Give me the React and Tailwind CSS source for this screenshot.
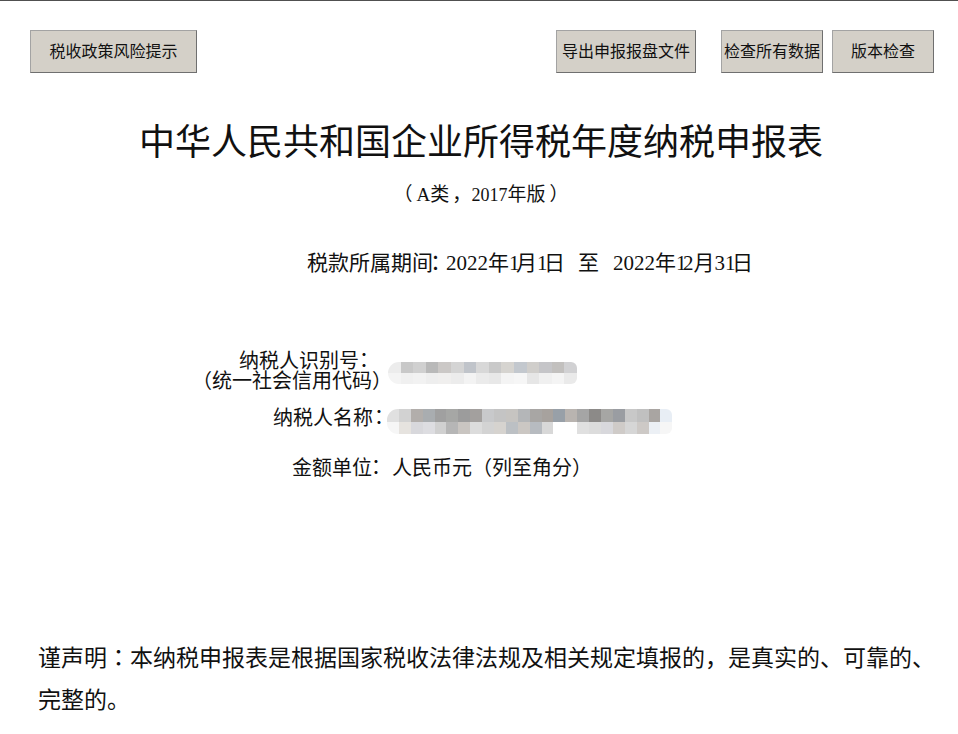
import React from "react";

const FONT = { fontFamily: '"Noto Sans CJK SC", sans-serif' };

function Btn({ w, children }) {
  return (
    <button
      className={`h-[43px] ${w} bg-[#d4d0c8] border border-[#a3a3a3] border-r-[#6f6f6f] border-b-[#6f6f6f] text-[16px] leading-none text-[#111] flex items-center justify-center whitespace-nowrap pb-[4px]`}
    >
      {children}
    </button>
  );
}

function Colon({ className = "" }) {
  return <span className={`font-['Noto_Sans_CJK_JP'] ${className}`}>：</span>;
}

function Num({ v }) {
  return (
    <span className="font-['Liberation_Serif']">
      {v.split("").map((c, i) =>
        c === "1" ? (
          <span key={i} className="-mr-[3.5px]">1</span>
        ) : (
          <span key={i}>{c}</span>
        )
      )}
    </span>
  );
}

function PixelBlur({ rows, cellW, rowH, className }) {
  return (
    <div className={`flex flex-col overflow-hidden rounded-l-[11px] rounded-r-[6px] blur-[0.7px] ${className}`}>
      {rows.map((r, i) => (
        <div key={i} className="flex">
          {r.map((c, j) => (
            <div key={j} style={{ width: cellW, height: rowH, backgroundColor: c }} />
          ))}
        </div>
      ))}
    </div>
  );
}

const blur1 = [
  ["#ececec", "#c8c8c8", "#d0d0d0", "#b9b9b9", "#cbc8c6", "#d4d4d4", "#c0c4ca", "#d8d8d8", "#c9c9c9", "#d6d4d0", "#c3c8ce", "#d0cecb", "#c5c5c8", "#c2c0be", "#d1d1d3"],
  ["#f4f4f4", "#f0f0f0", "#f2f2f2", "#eeeeee", "#f0efee", "#ececec", "#f3f3f3", "#ebebeb", "#e8e8e8", "#f4f4f4", "#f6f6f6", "#e6e6e6", "#f0f0f0", "#f4f4f4", "#eaeaea"],
];

const blur2 = [
  ["#e0e0e0", "#d2d2d2", "#b2aeab", "#a9adb0", "#a0a0a0", "#a6a7a5", "#9c9c9c", "#a3a09e", "#c8c9cb", "#c4c4c4", "#c6c4c1", "#b4b6b8", "#a8a6a4", "#a7a29e", "#98a0a8", "#b9b4b0", "#a5a5a5", "#8c8a88", "#a6a6a4", "#9a9da2", "#c8c8c8", "#c0c0c0", "#a9a5a2", "#e8eef5"],
  ["#f6f6f6", "#e6e3df", "#d8d8dc", "#dddde1", "#d0d0d0", "#b6b6b6", "#c9c5c1", "#dcdcdc", "#d3d3d3", "#d6d3cf", "#bcc0c4", "#cbc7c3", "#b7bbc0", "#d8d8d8", "#ffffff", "#ffffff", "#e0e0e0", "#dcdcdc", "#d8d8dc", "#cfcbc8", "#d6d6d6", "#cdc9c6", "#ecf0f5", "#f6f6f6"],
];

export default function App() {
  return (
    <div
      className="w-[958px] h-[734px] bg-white border-t border-[#505050] overflow-hidden text-[#111] [text-spacing-trim:space-all]"
      style={FONT}
    >
      {/* toolbar */}
      <div className="flex items-start justify-between pt-[29px] pl-[30px] pr-[24px]">
        <Btn w="w-[167px]">税收政策风险提示</Btn>
        <div className="flex">
          <Btn w="w-[140px]">导出申报报盘文件</Btn>
          <div className="w-[25px]" />
          <Btn w="w-[102px]">检查所有数据</Btn>
          <div className="w-[9px]" />
          <Btn w="w-[102px]">版本检查</Btn>
        </div>
      </div>

      {/* title */}
      <div className="mt-[48px] text-center text-[36px] leading-[36px] pl-[4px]">中华人民共和国企业所得税年度纳税申报表</div>
      <div className="mt-[26px] text-center text-[19px] leading-[19px] pl-[4px]">
        （<span className="font-['Liberation_Serif'] pl-[4px]">A</span>类<span className="pl-[3px]">，</span><span className="font-['Liberation_Serif'] text-[18px]">2017</span>年版<span className="pl-[4px]">）</span>
      </div>

      {/* period */}
      <div className="mt-[46px] pl-[307px] text-[21px] leading-[21px] whitespace-nowrap">
        税款所属期间<Colon className="-ml-[8px]" />
        <Num v="2022" />年<Num v="1" />月<Num v="1" />日<span className="inline-block w-[13px]" />至<span className="inline-block w-[14px]" />
        <Num v="2022" />年<Num v="12" />月<Num v="31" />日
      </div>

      {/* info rows */}
      <div className="mt-[76px] text-[20px] leading-[20px]">
        <div className="flex items-start">
          <div className="w-[392px] text-right">
            <div className="pr-[18px]">纳税人识别号<Colon className="-ml-[5px]" /></div>
            <div>（统一社会信用代码）</div>
          </div>
          <PixelBlur rows={blur1} cellW={12.6} rowH={11} className="mt-[12px] -ml-[4px]" />
        </div>
        <div className="mt-[17px] flex items-start">
          <div className="w-[392px] text-right pr-[3px]">纳税人名称<Colon className="-ml-[4px]" /></div>
          <PixelBlur rows={blur2} cellW={11.9} rowH={12.5} className="mt-[2px] -ml-[5px]" />
        </div>
        <div className="mt-[23px] flex items-start">
          <div className="w-[392px] text-right pr-[6px]">金额单位<Colon className="-ml-[6px]" /></div>
          <div>人民币元（列至角分）</div>
        </div>
      </div>

      {/* declaration */}
      <div className="mt-[158px] ml-[38px] w-[905px] text-[23px] leading-[42px]">
        谨声明<Colon />本纳税申报表是根据国家税收法律法规及相关规定填报的，是真实的、可靠的、完整的。
      </div>
    </div>
  );
}
